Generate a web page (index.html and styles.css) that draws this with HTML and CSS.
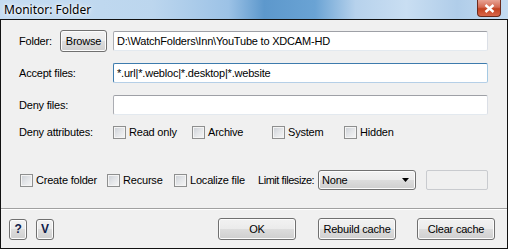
FILE: index.html
```html
<!DOCTYPE html>
<html>
<head>
<meta charset="utf-8">
<link rel="stylesheet" href="styles.css">
</head>
<body>
<div class="dialog">
  <div class="titlebar">
    <span class="title">Monitor: Folder</span>
    <span class="close"><svg width="11" height="9" viewBox="0 0 11 9"><path d="M1.5 1 L9.5 8 M9.5 1 L1.5 8" stroke="#fff" stroke-width="2.4" fill="none"/></svg></span>
  </div>
  <div class="window">
    <div class="form">
      <div class="row row1">
        <span class="label lbl-short">Folder:</span>
        <button class="btn browse">Browse</button>
        <span class="input">D:\WatchFolders\Inn\YouTube to XDCAM-HD</span>
      </div>
      <div class="row row2">
        <span class="label">Accept files:</span>
        <span class="input focused">*.url|*.webloc|*.desktop|*.website</span>
      </div>
      <div class="row row3">
        <span class="label">Deny files:</span>
        <span class="input"></span>
      </div>
      <div class="row row4">
        <span class="label">Deny attributes:</span>
        <span class="check w79"><span class="box"></span>Read only</span>
        <span class="check w80"><span class="box"></span>Archive</span>
        <span class="check w72"><span class="box"></span>System</span>
        <span class="check"><span class="box"></span>Hidden</span>
      </div>
      <div class="row row5">
        <span class="check w87"><span class="box"></span>Create folder</span>
        <span class="check w67"><span class="box"></span>Recurse</span>
        <span class="check w84"><span class="box"></span>Localize file</span>
        <span class="limit">Limit filesize:</span>
        <span class="select">None<svg class="arrow" width="7" height="4" viewBox="0 0 7 4"><path d="M0 0 H7 L3.5 4 Z" fill="#000"/></svg></span>
        <span class="sizebox"></span>
      </div>
    </div>
    <div class="sep"></div>
    <div class="bottom">
      <button class="btn small">?</button>
      <button class="btn small">V</button>
      <button class="btn wide ok">OK</button>
      <button class="btn wide rebuild">Rebuild cache</button>
      <button class="btn wide clear">Clear cache</button>
    </div>
  </div>
</div>
</body>
</html>
```

FILE: styles.css
```css
html, body {
  margin: 0;
  padding: 0;
  background: #f0f0f0;
}
.dialog {
  width: 508px;
  height: 249px;
  font-family: "Liberation Sans", Arial, sans-serif;
  font-size: 11px;
  letter-spacing: -0.2px;
  color: #000;
  overflow: hidden;
}
.titlebar {
  height: 19px;
  display: flex;
  align-items: flex-start;
  background: linear-gradient(90deg, #c5dcf1 0%, #bcd6ee 30%, #9cc2e6 45%, #5d98cc 52%, #6aa3d4 62%, #b7d2ec 70%, #c9def2 80%, #b0cde9 90%, #c4dbf1 100%);
}
.title {
  font-family: "Noto Sans", "Open Sans", sans-serif;
  font-size: 12px;
  letter-spacing: 0;
  line-height: 16px;
  padding: 2px 0 0 4px;
  flex: 1;
  text-shadow: 0 0 6px #fff, 0 0 3px #fff;
}
.close {
  width: 24px;
  height: 17px;
  margin-right: 7px;
  box-sizing: border-box;
  border: 1px solid #6b2b1d;
  border-top: none;
  border-radius: 0 0 4px 4px;
  background: linear-gradient(#e8a293 0%, #d46a52 45%, #c2411f 55%, #d8664a 100%);
  display: flex;
  align-items: center;
  justify-content: center;
}
.window {
  height: 230px;
  box-sizing: border-box;
  border: 1px solid #111;
  background: #f0f0f0;
}
.form {
  padding: 10px 19px 0 18px;
}
.row {
  display: flex;
  align-items: center;
}
.label {
  width: 94px;
  flex-shrink: 0;
  white-space: nowrap;
}
.lbl-short {
  width: 41px;
}
.row1 { height: 22px; }
.row2 { height: 20px; margin-top: 11px; }
.row3 { height: 20px; margin-top: 12px; }
.row4 { height: 16px; margin-top: 9px; }
.row5 { height: 20px; margin-top: 30px; padding-left: 1px; }
.input {
  flex: 1;
  height: 20px;
  box-sizing: border-box;
  border: 1px solid #abadb3;
  border-top-color: #9ea0a6;
  border-bottom-color: #e3e9ef;
  border-right-color: #dbdfe6;
  border-radius: 2px;
  background: #fff;
  padding: 0 3px;
  line-height: 18px;
  white-space: nowrap;
}
.input.focused {
  border-color: #3d7bad;
  border-bottom-color: #b5cfe7;
  border-right-color: #a4c9e3;
}
.btn {
  font-family: "Liberation Sans", Arial, sans-serif;
  font-size: 11px;
  letter-spacing: -0.2px;
  color: #000;
  box-sizing: border-box;
  border: 1px solid #707070;
  border-radius: 3px;
  background: linear-gradient(#f2f2f2 0%, #ebebeb 49%, #dddddd 50%, #cfcfcf 100%);
  box-shadow: inset 0 0 0 1px #fcfcfc;
  padding: 0;
  margin: 0;
  flex-shrink: 0;
}
.browse {
  width: 47px;
  height: 22px;
  margin-right: 6px;
}
.check {
  display: flex;
  align-items: center;
  white-space: nowrap;
  flex-shrink: 0;
}
.box {
  width: 13px;
  height: 13px;
  box-sizing: border-box;
  border: 1px solid #8e8f8f;
  background: linear-gradient(135deg, #cbcfd5 0%, #e3e5e8 50%, #f6f6f6 100%);
  box-shadow: inset 0 0 0 1px #f4f4f4;
  margin-right: 3px;
}
.w79 { width: 79px; }
.w80 { width: 80px; }
.w72 { width: 72px; }
.w87 { width: 87px; }
.w67 { width: 67px; }
.w84 { width: 84px; }
.limit {
  width: 60px;
  flex-shrink: 0;
  white-space: nowrap;
  letter-spacing: -0.45px;
}
.select {
  width: 98px;
  height: 20px;
  flex-shrink: 0;
  box-sizing: border-box;
  border: 1px solid #707070;
  border-radius: 3px;
  background: linear-gradient(#f2f2f2 0%, #ebebeb 49%, #dddddd 50%, #cfcfcf 100%);
  box-shadow: inset 0 0 0 1px #fcfcfc;
  display: flex;
  align-items: center;
  padding: 0 6px 0 3px;
  justify-content: space-between;
}
.sizebox {
  width: 62px;
  height: 20px;
  flex-shrink: 0;
  margin-left: 10px;
  box-sizing: border-box;
  border: 1px solid #c9cbcf;
  border-radius: 2px;
  background: #f0f0f0;
}
.sep {
  margin-top: 18px;
  height: 0;
  border-top: 1px solid #a0a0a0;
  border-bottom: 1px solid #fff;
}
.bottom {
  display: flex;
  align-items: center;
  padding: 8px 0 0 8px;
}
.small {
  width: 18px;
  height: 21px;
  font-weight: bold;
  color: #10204a;
  margin-right: 9px;
  font-size: 12px;
}
.wide {
  width: 78px;
  height: 22px;
}
.ok { margin-left: 155px; }
.rebuild { margin-left: 22px; }
.clear { margin-left: 21px; }
```
